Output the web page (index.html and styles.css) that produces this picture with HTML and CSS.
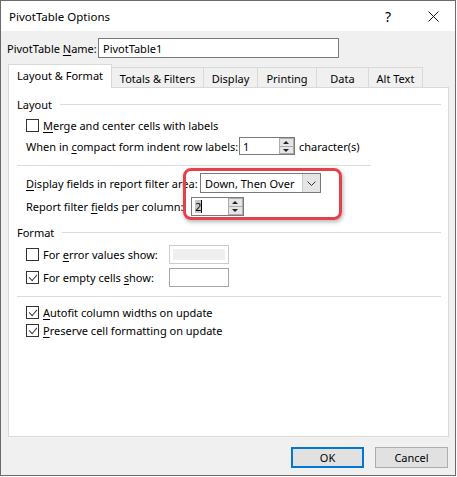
FILE: index.html
```html
<!DOCTYPE html>
<html lang="en">
<head>
    <meta charset="UTF-8">
    <title>PivotTable Options</title>
    <link rel="stylesheet" href="styles.css">
</head>
<body>
    <div class="dialog">
        <div class="titlebar">
            <span class="title">PivotTable Options</span>
            <span class="help">?</span>
            <svg class="close" width="11" height="11" viewBox="0 0 11 11">
                <path d="M0.5 0.5 L10.5 10.5 M10.5 0.5 L0.5 10.5" stroke="#111" stroke-width="1" fill="none"/>
            </svg>
        </div>
        <div class="content">
            <div class="name-row">
                <span class="name-label">PivotTable <u>N</u>ame:</span>
                <div class="textbox name-box">PivotTable1</div>
            </div>
            <div class="tabs">
                <div class="tab active" style="width: 104px">Layout &amp; Format</div>
                <div class="tab" style="width: 93px">Totals &amp; Filters</div>
                <div class="tab" style="width: 55px">Display</div>
                <div class="tab" style="width: 60px">Printing</div>
                <div class="tab" style="width: 53px">Data</div>
                <div class="tab" style="width: 55px">Alt Text</div>
            </div>
            <div class="panel">
                <div class="group-title"><span>Layout</span><i class="rule"></i></div>

                <div class="opt row-merge">
                    <span class="check"></span>
                    <span><u>M</u>erge and center cells with labels</span>
                </div>
                <div class="opt row-indent">
                    <span class="label w-indent">When in <u>c</u>ompact form indent row labels:</span>
                    <div class="spin w-indent-box">
                        <span class="spin-text">1</span>
                        <div class="spin-btns"><i class="up"></i><i class="down"></i></div>
                    </div>
                    <span class="after">character(s)</span>
                </div>
                <div class="sep short"></div>

                <div class="opt row-display">
                    <span class="label w-display"><u>D</u>isplay fields in report filter area:</span>
                    <div class="combo">
                        <span class="combo-text">Down, Then Over</span>
                        <div class="combo-btn">
                            <svg width="9" height="5" viewBox="0 0 9 5"><path d="M0.5 0.5 L4.5 4.5 L8.5 0.5" stroke="#333" fill="none"/></svg>
                        </div>
                    </div>
                </div>
                <div class="opt row-report">
                    <span class="label w-report">Report filter <u>f</u>ields per column:</span>
                    <div class="spin w-report-box">
                        <span class="spin-text"><span class="sel">2</span><span class="caret"></span></span>
                        <div class="spin-btns"><i class="up"></i><i class="down"></i></div>
                    </div>
                </div>

                <div class="group-title gt-format"><span>Format</span><i class="rule"></i></div>
                <div class="opt row-error">
                    <span class="check"></span>
                    <span class="label w-show">For <u>e</u>rror values show:</span>
                    <div class="textbox small disabled"></div>
                </div>
                <div class="opt row-empty">
                    <span class="check on"></span>
                    <span class="label w-show">For empty cells <u>s</u>how:</span>
                    <div class="textbox small"></div>
                </div>
                <div class="sep"></div>

                <div class="opt row-autofit">
                    <span class="check on"></span>
                    <span><u>A</u>utofit column widths on update</span>
                </div>
                <div class="opt row-preserve">
                    <span class="check on"></span>
                    <span><u>P</u>reserve cell formatting on update</span>
                </div>

                <div class="callout"></div>
            </div>
            <div class="buttons">
                <button class="btn default">OK</button>
                <button class="btn">Cancel</button>
            </div>
        </div>
    </div>
</body>
</html>
```

FILE: styles.css
```css
body {
    margin: 0;
    background-color: #fff;
    font-family: 'Noto Sans', 'Liberation Sans', sans-serif;
    font-size: 11px;
    color: #000;
    white-space: nowrap;
}
u {
    text-decoration-thickness: 1px;
    text-underline-offset: 2px;
}
.dialog {
    width: 456px;
    height: 476px;
    box-sizing: border-box;
    border: 1px solid #6b6b6b;
    display: flex;
    flex-direction: column;
}
.titlebar {
    height: 30px;
    background-color: #fff;
    display: flex;
    align-items: center;
    padding-left: 8px;
    font-size: 11.5px;
}
.title {
    flex-grow: 1;
}
.help {
    font-size: 14px;
    margin-right: 37px;
}
.close {
    margin-right: 16px;
}
.content {
    flex-grow: 1;
    background-color: #f0f0f0;
    padding: 7px 7px 0 6px;
}
.name-row {
    display: flex;
    align-items: center;
    height: 20px;
}
.name-label {
    width: 91px;
}
.textbox {
    box-sizing: border-box;
    background-color: #fff;
    border: 1px solid #7a7a7a;
    display: flex;
    align-items: center;
    padding-left: 4px;
}
.name-box {
    width: 241px;
    height: 20px;
}

/* tab strip */
.tabs {
    display: flex;
    align-items: flex-end;
    margin: 6px 0 0 1px;
    height: 23px;
}
.tab {
    box-sizing: border-box;
    height: 20px;
    border: 1px solid #d9d9d9;
    border-bottom: none;
    margin-left: -1px;
    display: flex;
    align-items: center;
    justify-content: center;
    padding-top: 1px;
}
.tab:first-child {
    margin-left: 0;
}
.tab.active {
    height: 24px;
    margin-bottom: -1px;
    background-color: #fff;
    position: relative;
    z-index: 1;
    padding-top: 0;
    padding-bottom: 2px;
}
.panel {
    position: relative;
    box-sizing: border-box;
    width: 441px;
    height: 350px;
    margin-left: 1px;
    background-color: #fff;
    border: 1px solid #d9d9d9;
    padding: 8px 7px 0 8px;
}
.group-title {
    display: flex;
    align-items: center;
    height: 16px;
}
.group-title span {
    margin-right: 8px;
}
.group-title .rule {
    flex-grow: 1;
    height: 1px;
    background-color: #dcdcdc;
}
.gt-format {
    margin-top: 8px;
}
.sep {
    height: 1px;
    background-color: #dcdcdc;
    margin-top: 9px;
}
.sep.short {
    width: 354px;
    margin-top: 10px;
}
.opt {
    display: flex;
    align-items: center;
    margin-left: 9px;
}
.row-merge { height: 16px; margin-top: 5px; }
.row-indent { height: 18px; margin-top: 4px; }
.row-display { height: 20px; margin-top: 7px; }
.row-report { height: 19px; margin-top: 4px; }
.row-error { height: 19px; margin-top: 5px; }
.row-empty { height: 19px; margin-top: 4px; }
.row-autofit { height: 16px; margin-top: 7px; }
.row-preserve { height: 16px; margin-top: 2px; }

.check {
    box-sizing: border-box;
    width: 13px;
    height: 13px;
    border: 1px solid #333;
    background-color: #fff;
    margin-right: 4px;
    flex-shrink: 0;
    position: relative;
}
.check.on::after {
    content: '';
    position: absolute;
    left: 2px;
    top: 0px;
    width: 7px;
    height: 4px;
    border-left: 1px solid #333;
    border-bottom: 1px solid #333;
    transform: translate(0, 2px) rotate(-50deg) skewX(-6deg);
    transform-origin: center;
}
.label {
    flex-shrink: 0;
}
.w-indent { width: 213px; }
.w-display { width: 174px; }
.w-report { width: 165px; }
.w-show { width: 126px; }

/* spinner boxes */
.spin {
    box-sizing: border-box;
    display: flex;
    border: 1px solid #7a7a7a;
    background-color: #fff;
    height: 100%;
}
.w-indent-box { width: 56px; }
.w-report-box { width: 53px; }
.spin-text {
    flex-grow: 1;
    display: flex;
    align-items: center;
    padding-left: 3px;
}
.sel {
    background-color: #c8c8c8;
    line-height: 13px;
}
.caret {
    width: 1px;
    height: 13px;
    background-color: #000;
}
.spin-btns {
    width: 15px;
    display: flex;
    flex-direction: column;
    border-left: 1px solid #fff;
}
.spin-btns i {
    flex: 1;
    background-color: #e5e5e5;
    border: 1px solid #adadad;
    position: relative;
}
.spin-btns i + i {
    border-top: none;
}
.spin-btns i::after {
    content: '';
    position: absolute;
    left: 3px;
    border-left: 3px solid transparent;
    border-right: 3px solid transparent;
}
.spin-btns .up::after {
    top: 2px;
    border-bottom: 3px solid #222;
}
.spin-btns .down::after {
    top: 2px;
    border-top: 3px solid #222;
}
.after {
    margin-left: 4px;
}

/* combo box */
.combo {
    box-sizing: border-box;
    width: 121px;
    height: 100%;
    display: flex;
    border: 1px solid #7a7a7a;
    background-color: #fff;
}
.combo-text {
    flex-grow: 1;
    display: flex;
    align-items: center;
    padding-left: 4px;
}
.combo-btn {
    width: 17px;
    background-color: #e5e5e5;
    border-left: 1px solid #c8c8c8;
    display: flex;
    align-items: center;
    justify-content: center;
}
.textbox.small {
    width: 60px;
    height: 100%;
    border-color: #a6a6a6;
}
.textbox.disabled {
    border-color: #cccccc;
    background-color: #efefef;
    box-shadow: inset 0 0 0 3px #fff;
}

/* red marker drawn around the filter options */
.callout {
    position: absolute;
    left: 174px;
    top: 80px;
    width: 159px;
    height: 52px;
    box-sizing: border-box;
    border: 3px solid #e5414a;
    border-radius: 8px;
    box-shadow: 1px 2px 4px rgba(0, 0, 0, 0.3);
}

.buttons {
    display: flex;
    justify-content: flex-end;
    gap: 11px;
    margin-top: 10px;
    margin-right: 0;
}
.btn {
    box-sizing: border-box;
    width: 73px;
    height: 21px;
    font-family: inherit;
    font-size: 11px;
    background-color: #e1e1e1;
    border: 1px solid #adadad;
    padding: 0;
}
.btn.default {
    border: 2px solid #0078d7;
}
```
